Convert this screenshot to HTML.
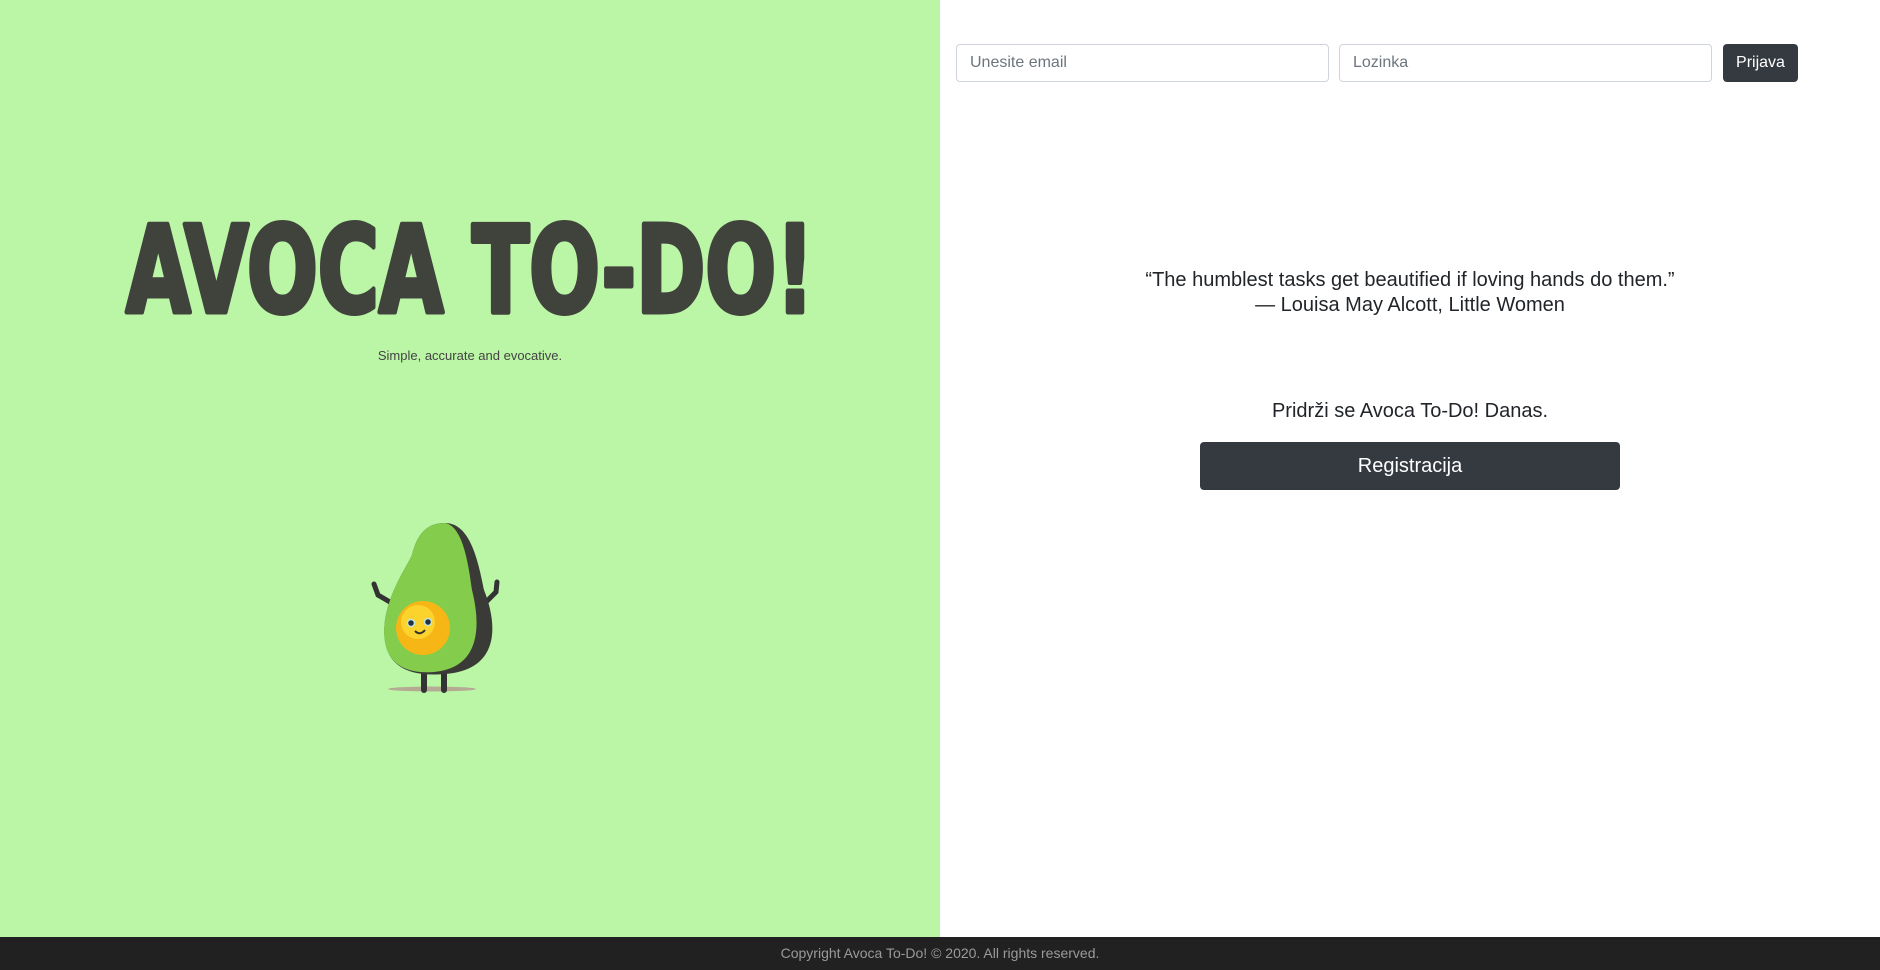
<!DOCTYPE html>
<html><head><meta charset="utf-8"><style>
*{margin:0;padding:0;box-sizing:border-box}
body{width:1880px;height:970px;overflow:hidden;font-family:"Liberation Sans",Arial,sans-serif;background:#fff;position:relative}
.left{position:absolute;left:0;top:0;width:940px;height:937px;background:#bbf5a6}
.foot{position:absolute;left:0;top:937px;width:1880px;height:33px;background:#212121;color:#9a9a9a;font-size:14px;text-align:center;line-height:33px}
.inp{position:absolute;top:44px;height:38px;border:1px solid #ced4da;border-radius:4px;color:#6c757d;font-size:16px;line-height:36px;padding-left:13px}
.btn{position:absolute;background:#343a40;color:#fff;border-radius:4px;text-align:center}
.c{position:absolute;left:940px;width:940px;text-align:center;color:#212529}
</style></head><body>
<div class="left">
<svg width="940" height="940" style="position:absolute;left:0;top:0">
<text x="126" y="312" font-family="DejaVu Sans Condensed, Liberation Sans, sans-serif" font-weight="bold" font-size="120" fill="#40423c" stroke="#40423c" stroke-width="5" stroke-linejoin="round" textLength="688" lengthAdjust="spacingAndGlyphs">AVOCA TO-DO!</text>
<ellipse cx="432" cy="689" rx="44" ry="2.5" fill="#b5aa93"/>
<path d="M395 605 L378 595 L374 584" stroke="#333" stroke-width="5" fill="none" stroke-linecap="round"/>
<path d="M485 603 L496 592 L497 582" stroke="#333" stroke-width="5" fill="none" stroke-linecap="round"/>
<path d="M424 670 L424 690 M444 670 L444 690" stroke="#333" stroke-width="6" stroke-linecap="round"/>
<path d="M445 523 C470 523 478 560 484 590 C498 625 500 670 445 674 C400 678 380 660 385 620 C390 590 405 570 412 555 C418 530 430 523 445 523 Z" fill="#3a3b36"/>
<path d="M445 523 C462 526 468 560 472 590 C482 630 478 668 434 672 C396 675 380 655 385 620 C390 590 405 570 412 555 C418 530 430 523 445 523 Z" fill="#83cc4c"/>
<circle cx="423" cy="628" r="27" fill="#f6b716"/>
<circle cx="418" cy="622" r="17" fill="#fcd22c"/>
<circle cx="411" cy="623" r="3.5" fill="#24303a" stroke="#bfe7e0" stroke-width="1.5"/>
<circle cx="428" cy="622" r="3.5" fill="#24303a" stroke="#bfe7e0" stroke-width="1.5"/>
<path d="M415 631 Q420 636 425 630" stroke="#333" stroke-width="2" fill="none"/>
</svg>
<div style="position:absolute;left:0;width:940px;top:348px;text-align:center;font-size:13px;color:#444">Simple, accurate and evocative.</div>
</div>
<div class="inp" style="left:956px;width:373px">Unesite email</div>
<div class="inp" style="left:1339px;width:373px">Lozinka</div>
<div class="btn" style="left:1723px;top:44px;width:75px;height:38px;line-height:38px;font-size:16px">Prijava</div>
<div class="c" style="top:268px;font-size:20px;line-height:25px">“The humblest tasks get beautified if loving hands do them.”<br>— Louisa May Alcott, Little Women</div>
<div class="c" style="top:399px;font-size:20px;line-height:24px">Pridrži se Avoca To-Do! Danas.</div>
<div class="btn" style="left:1200px;top:442px;width:420px;height:48px;line-height:48px;font-size:20px">Registracija</div>
<div class="foot">Copyright Avoca To-Do! © 2020. All rights reserved.</div>
</body></html>
